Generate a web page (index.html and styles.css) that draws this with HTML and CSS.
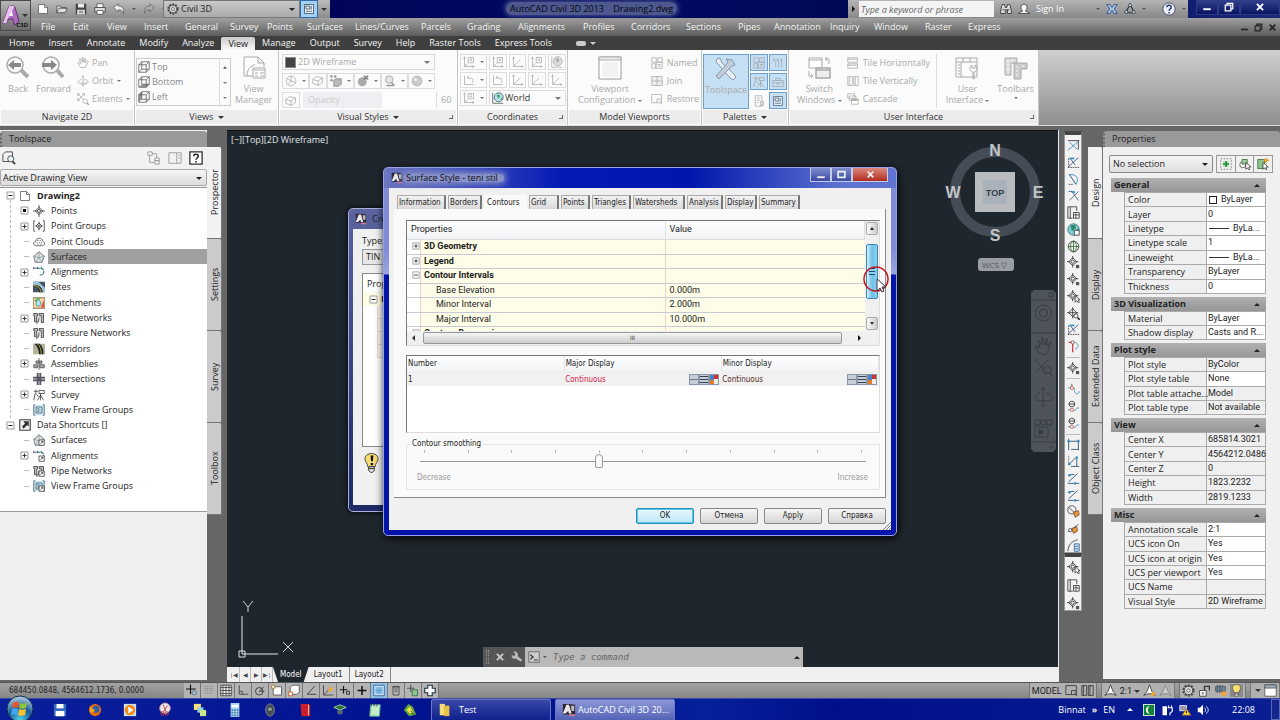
FILE: index.html
```html
<!DOCTYPE html>
<html lang="en">
<head>
<meta charset="utf-8">
<title>AutoCAD Civil 3D 2013 - Drawing2.dwg</title>
<link rel="stylesheet" href="styles.css">
</head>
<body>
<svg class="sprite" aria-hidden="true">
  <symbol id="new" viewBox="0 0 16 16"><path d="M2 2h8l4 4v8H2z" fill="#fff" stroke="#555"/><path d="M10 2v4h4" stroke="#555"/></symbol>
  <symbol id="open" viewBox="0 0 16 16"><path d="M1 13V4h5l1 2h6v2M1 13l3-6h11l-3 6z" fill="#ddd" stroke="#444"/></symbol>
  <symbol id="save" viewBox="0 0 16 16"><path d="M1 1h14v14H1z" fill="#444"/><path d="M4 1h8v5H4zM3 9h10v6H3z" fill="#eee"/><path d="M5 11h6M5 13h6" stroke="#555"/></symbol>
  <symbol id="print" viewBox="0 0 16 16"><path d="M4 6V1h8v5" fill="#fff" stroke="#444"/><path d="M1 6h14v6H1z" fill="#ddd" stroke="#333"/><path d="M4 10h8v5H4z" fill="#fff" stroke="#444"/></symbol>
  <symbol id="undo" viewBox="0 0 16 16"><path d="M1 6l6-5v3c6 0 8 4 7 10-1-4-3-5-7-5v3z" fill="#eee" stroke="#555"/></symbol>
  <symbol id="redo" viewBox="0 0 16 16"><path d="M15 6L9 1v3C3 4 1 8 2 14c1-4 3-5 7-5v3z" fill="#aaa" stroke="#666"/></symbol>
  <symbol id="gear" viewBox="0 0 16 16"><circle cx="8" cy="8" r="6" stroke="#444" stroke-width="3" stroke-dasharray="2.4 1.4"/><circle cx="8" cy="8" r="5" fill="#ddd" stroke="#444"/><circle cx="8" cy="8" r="2" fill="#fff" stroke="#444"/></symbol>
  <symbol id="panel" viewBox="0 0 16 16"><path d="M2 2h12v12H2z" fill="#e8f2fb" stroke="#345"/><path d="M4 4h5v4H4zM11 4v5M4 11h8" stroke="#345"/></symbol>
  <symbol id="binoc" viewBox="0 0 16 16"><path d="M1 9l2-7h3l1 4h2l1-4h3l2 7v5h-5V9H7v5H1z" fill="#ddd" stroke="#222"/><path d="M3 9h3M10 9h3" stroke="#222"/></symbol>
  <symbol id="person" viewBox="0 0 16 16"><path d="M4 6c0-6 8-6 8 0 0 3-2 3-2 5l5 2v1H1v-1l5-2c0-2-2-2-2-5z" fill="#fff" stroke="#333"/></symbol>
  <symbol id="exch" viewBox="0 0 16 16"><path d="M1 2h4l3 4 3-4h4l-4 6 4 6h-4l-3-4-3 4H1l4-6z" fill="#aac2e8" stroke="#223f80"/></symbol>
  <symbol id="a360" viewBox="0 0 16 16"><path d="M8 2L2 13h12z" stroke="#234" stroke-width="1.5"/><circle cx="8" cy="3" r="2" fill="#ddd" stroke="#234"/><circle cx="3" cy="12" r="2" fill="#ddd" stroke="#234"/><circle cx="13" cy="12" r="2" fill="#ddd" stroke="#234"/></symbol>
  <symbol id="help" viewBox="0 0 16 16"><circle cx="8" cy="8" r="7" fill="#eef" stroke="#446"/><path d="M5.500 6c0-3 5-3 5 0 0 2-2.500 2-2.500 4M8 11.500v1.500" stroke="#236" stroke-width="1.600"/></symbol>
  <symbol id="min" viewBox="0 0 16 16"><path d="M2 10h12v3H2z" fill="currentColor"/></symbol>
  <symbol id="rest" viewBox="0 0 16 16"><path d="M5 5V2h9v9h-3M2 5h9v9H2z" stroke="currentColor" stroke-width="2"/></symbol>
  <symbol id="box" viewBox="0 0 16 16"><path d="M2 3h12v10H2z" stroke="currentColor" stroke-width="3"/></symbol>
  <symbol id="x" viewBox="0 0 16 16"><path d="M3 3l10 10M13 3L3 13" stroke="currentColor" stroke-width="3"/></symbol>
  <symbol id="hand" viewBox="0 0 16 16"><path d="M5 14L1 8l1-1 3 2-2-6 1-1 3 5V1h2v6l2-5 1 1-1 5 3-3 1 1-4 8z" stroke="currentColor"/></symbol>
  <symbol id="orbit" viewBox="0 0 16 16"><path d="M8 1v12M6 3l2-2 2 2M6 12l2 3 2-3M6 6C0 7 0 11 6 11h7M10 6c7 1 5 4 3 5M11 9l2 2-2 2" stroke="currentColor"/></symbol>
  <symbol id="extents" viewBox="0 0 16 16"><path d="M1 1l8 8M10 1L1 10M1 4V1h3M7 1h3v3M1 7v3h3" stroke="currentColor"/><circle cx="11" cy="11" r="3" stroke="currentColor"/><path d="M13 13l3 3" stroke="currentColor" stroke-width="2"/></symbol>
  <symbol id="navL" viewBox="0 0 24 24"><circle cx="9" cy="9" r="8" stroke="currentColor" stroke-width="1.500"/><path d="M15 14l7 7" stroke="currentColor" stroke-width="4"/><path d="M2 9l6-5v3h7v4H8v3z" fill="#888"/></symbol>
  <symbol id="navR" viewBox="0 0 24 24"><circle cx="10" cy="9" r="8" stroke="currentColor" stroke-width="1.500"/><path d="M16 14l6 7" stroke="currentColor" stroke-width="4"/><path d="M16 9l-6-5v3H1v4h9v3z" fill="#888"/></symbol>
  <symbol id="cube" viewBox="0 0 16 16"><path d="M1 5h10v10H1zM1 5l4-4h10v10l-4 4M11 5l4-4M5 1v10h10M1 15l4-4" stroke="#555"/></symbol>
  <symbol id="cubeB" viewBox="0 0 16 16"><path d="M1 15l4-4h10l-4 4z" fill="#999"/><path d="M1 5h10v10H1zM1 5l4-4h10v10l-4 4M11 5l4-4M5 1v10h10" stroke="#555"/></symbol>
  <symbol id="cubeL" viewBox="0 0 16 16"><path d="M1 5l4-4v10l-4 4z" fill="#999"/><path d="M1 5h10v10H1zM1 5l4-4h10v10l-4 4M11 5l4-4M5 1v10h10" stroke="#555"/></symbol>
  <symbol id="viewmgr" viewBox="0 0 24 24"><path d="M2 20V1h14l6 6v4M16 1v6h6M5 20c0-10 7-10 8-12M2 20h10" stroke="currentColor"/><path d="M11 12h12v10H11z" fill="#fff" stroke="currentColor"/><path d="M11 14h12M13 17h3M13 20h3M18 17h4M18 20h4" stroke="currentColor"/></symbol>
  <symbol id="wheel" viewBox="0 0 16 16"><circle cx="8" cy="8" r="6.500" stroke="currentColor"/><path d="M8 8V2M8 8l6 2M8 8l-4 5M8 8L3 5" stroke="currentColor"/></symbol>
  <symbol id="solid" viewBox="0 0 16 16"><path d="M1 6l5-4 8 2v6l-6 4-7-3zM1 6l7 2 6-4M8 8v6" stroke="currentColor"/></symbol>
  <symbol id="boxes" viewBox="0 0 16 16"><path d="M1 1h2v2H1zM6 1h2v2H6zM1 6h2v2H1zM5 7l3-2h7v7l-3 3H5z" fill="#bbb" stroke="#888"/></symbol>
  <symbol id="ball" viewBox="0 0 16 16"><circle cx="8" cy="8" r="6.500" fill="#ccc" stroke="currentColor"/><circle cx="6" cy="6" r="2" fill="#f6f6f6"/></symbol>
  <symbol id="ballx" viewBox="0 0 16 16"><circle cx="7" cy="9" r="6" fill="#aaa"/><path d="M9 1l6 5M15 1L9 6" stroke="#777" stroke-width="2"/></symbol>
  <symbol id="shade" viewBox="0 0 16 16"><circle cx="7" cy="6" r="5" fill="#e6e6e6" stroke="#999"/><path d="M3 14h10M10 10l4 4" stroke="#999" stroke-width="2"/></symbol>
  <symbol id="ucs" viewBox="0 0 16 16"><path d="M2 3v11h12M2 14l9-9M1 4l1-3 1 3M12 13l3 1-3 1" stroke="currentColor"/></symbol>
  <symbol id="ucsb" viewBox="0 0 16 16"><path d="M2 3v11h12M2 14l4-4M1 4l1-3 1 3M12 13l3 1-3 1M7 2h7v7H7zM9 4h3M9 6h3" stroke="currentColor"/></symbol>
  <symbol id="ucsr" viewBox="0 0 16 16"><path d="M2 2v12h12M5 6l2-3v3c6-2 8 2 5 6" stroke="currentColor"/></symbol>
  <symbol id="ucsg" viewBox="0 0 16 16"><path d="M1 1v14h14" stroke="currentColor"/><circle cx="9" cy="7" r="6" fill="#ddd" stroke="currentColor"/><path d="M6 4l4-1 1 3-3 3z" fill="#aaa"/></symbol>
  <symbol id="globe" viewBox="0 0 16 16"><path d="M1 1v14h14" stroke="#444"/><circle cx="9" cy="7" r="6" fill="#bde2ee" stroke="#356"/><path d="M6 4l4-1 1 3-3 3zM11 9l3-2-1 4z" fill="#4a7"/></symbol>
  <symbol id="vp" viewBox="0 0 24 24"><path d="M1 1h22v22H1z" fill="#fff" stroke="#999"/><path d="M1 1h22v3H1z" fill="#eee" stroke="#aaa"/><path d="M4 6h16v15H4z" fill="#f2f2f2"/></symbol>
  <symbol id="named" viewBox="0 0 16 16"><path d="M1 1h6v6H1zM9 1h6v6H9zM1 9h5v6H1zM7 7h8v8H7zM9 10h4M9 12h4" stroke="currentColor"/></symbol>
  <symbol id="join" viewBox="0 0 16 16"><path d="M1 2h14v12H1zM8 2v12M1 8h14" fill="#eee" stroke="currentColor"/></symbol>
  <symbol id="restv" viewBox="0 0 16 16"><path d="M1 2h13v11H1zM8 8h6M8 8v5M12 10l3 5" stroke="currentColor"/></symbol>
  <symbol id="tools" viewBox="0 0 24 24"><path d="M3 2l-1 3 3 3 11 13 3 2 3-3-2-3L8 6 6 1z" fill="#e8eef4" stroke="#8899aa"/><path d="M21 8l-3-5-6-1 2 3-2 3L2 19l3 3L16 11l2-2z" fill="#c2cdd8" stroke="#8899aa"/></symbol>
  <symbol id="brush" viewBox="0 0 16 16"><path d="M2 2l3 5v7M7 2l2 5v7M12 2l1 5v7M1 4h3M6 4h3M11 4h3" stroke="currentColor"/></symbol>
  <symbol id="survey" viewBox="0 0 16 16"><path d="M1 3h6M4 1v4M8 2h7v4H8zM10 6v3M10 8L6 15M10 8v7M10 8l4 7M3 5l-2 10M4 6l3 4" stroke="currentColor"/></symbol>
  <symbol id="case" viewBox="0 0 16 16"><path d="M1 6h14v8H1zM5 6V3h6v3M1 9h14M7 9v2h2V9" stroke="currentColor"/></symbol>
  <symbol id="doc" viewBox="0 0 16 16"><path d="M3 1h9v14H3zM5 4h5M5 7h5M5 10h3M10 9h4v5h-4z" stroke="currentColor"/></symbol>
  <symbol id="switch" viewBox="0 0 24 24"><path d="M2 2h13v10H2zM2 4h13" fill="#fff" stroke="currentColor"/><path d="M9 12h14v10H9zM9 14h14" fill="#eee" stroke="currentColor" stroke-width="1.500"/><path d="M18 3h4v5M20 1l-2 2 2 2M2 15v5h4M4 18l2 2-2 2" stroke="currentColor"/></symbol>
  <symbol id="tileh" viewBox="0 0 16 16"><path d="M1 1h13v6H1zM1 9h13v6H1zM1 3h13M1 11h13" stroke="currentColor"/></symbol>
  <symbol id="tilev" viewBox="0 0 16 16"><path d="M1 2h6v12H1zM9 2h6v12H9zM3 2v12M11 2v12" stroke="currentColor"/></symbol>
  <symbol id="casc" viewBox="0 0 16 16"><path d="M1 1h9v6H1zM3 4h9v6H3zM6 8h9v7H6z" fill="#fff" stroke="currentColor"/><path d="M6 9h9" stroke="currentColor" stroke-width="2"/></symbol>
  <symbol id="ui" viewBox="0 0 24 24"><path d="M1 2h21v19H1zM1 6h21M8 2v4M15 2v4M6 6v15" stroke="currentColor"/><path d="M3 9h2M3 12h2M3 15h2M3 18h2" stroke="currentColor"/><path d="M18 23V16c-4-1-4-5-1-7v3h3V9c3 2 2 6-1 7v7z" fill="#fff" stroke="currentColor"/></symbol>
  <symbol id="tbars" viewBox="0 0 24 24"><path d="M1 2h12v5H7v12H1z" fill="#ddd" stroke="currentColor"/><path d="M10 7h13v6h-6v10h-7z" fill="#ccc" stroke="currentColor"/><path d="M3 5h2M3 9h2M3 13h2M7 5h2M12 11h2M12 15h2M12 19h2M18 10h2" stroke="#fff"/></symbol>
  <symbol id="pt" viewBox="0 0 16 16"><path d="M8 0v16M0 8h16M8 3l5 5-5 5-5-5z" stroke="#333"/><circle cx="8" cy="8" r="2" fill="#fff" stroke="#333"/></symbol>
  <symbol id="ptg" viewBox="0 0 16 16"><path d="M3 1H1v14h2M13 1h2v14h-2M8 2v12M3 8h10M8 4l4 4-4 4-4-4z" stroke="#333"/></symbol>
  <symbol id="cloud" viewBox="0 0 16 16"><path d="M3 13C-1 11 1 7 4 7c0-6 9-5 9 0 4 1 3 6-1 6z" stroke="#444"/><path d="M6 6h1M9 6h1M5 9h1M8 9h1M11 9h1M6 11h1M10 11h1" stroke="#333" stroke-width="1.500"/></symbol>
  <symbol id="surf" viewBox="0 0 16 16"><path d="M1 7l7-6 7 6-3 8H3z" fill="#dce3e6" stroke="#555"/><path d="M8 1v8M1 7l7 2 7-2M8 9l-5 6M8 9l4 6" stroke="#899"/></symbol>
  <symbol id="align" viewBox="0 0 16 16"><path d="M1 3h9c6 0 6 9 0 9H8" stroke="#2a7a94" stroke-width="1.500" stroke-dasharray="4 1"/><path d="M1 1v3M6 1v3M11 1v3" stroke="#333"/></symbol>
  <symbol id="site" viewBox="0 0 16 16"><path d="M0 1h16v14H0z" fill="#456"/><path d="M0 1h7l9 8v6h-3C12 8 7 6 0 6z" fill="#9cc6dc"/><path d="M1 5c7 0 12 4 12 10H8C8 10 5 8 1 8z" fill="#333"/><path d="M1 6c6 1 9 4 10 9" stroke="#dd3"/></symbol>
  <symbol id="catch" viewBox="0 0 16 16"><path d="M0 1h16v14H0z" fill="#f5d9a0" stroke="#643"/><path d="M1 5l5-4h4L7 8z" fill="#7b6"/><path d="M10 14L15 3v11z" fill="#db5b3c"/><path d="M7 3c5 5 4 9 0 9S3 8 7 3z" fill="#b8e3f8" stroke="#28a"/></symbol>
  <symbol id="pipe" viewBox="0 0 16 16"><path d="M1 2h5v3H5v8H2V5H1zM8 2h6v12h-3V5H8zM4 15c3 0 4-2 4-8" fill="#bbb" stroke="#333"/></symbol>
  <symbol id="corr" viewBox="0 0 16 16"><path d="M0 1h16v14H0z" fill="#b5b39b"/><path d="M2 1h7c4 4 5 8 5 14H8C8 9 6 5 2 1z" fill="#222"/><path d="M6 1c4 4 5 8 5 14" stroke="#cd5"/></symbol>
  <symbol id="asm" viewBox="0 0 16 16"><path d="M8 0v16M4 4h8v3H4zM1 9h5v4H1zM9 9h6v4H9z" fill="#aaa" stroke="#444"/></symbol>
  <symbol id="inter" viewBox="0 0 16 16"><path d="M5 0h6v5h5v6h-5v5H5v-5H0V5h5z" fill="#556"/><path d="M8 0v5M8 11v5M0 8h5M11 8h5" stroke="#fff"/></symbol>
  <symbol id="frame" viewBox="0 0 16 16"><path d="M1 1h14v14H1z" fill="#cde7f2"/><path d="M3 1H1v14h2M13 1h2v14h-2M4 4h8v8H4zM6 6h2M6 8h4M6 10h2" stroke="#356"/></symbol>
  <symbol id="short" viewBox="0 0 16 16"><path d="M1 1h14v14H1z" fill="#eee" stroke="#444" stroke-width="1.500"/><path d="M6 3h7v7l-2-2-5 5-2-3 4-4z" fill="#333"/></symbol>
  <symbol id="link" viewBox="0 0 16 16"><path d="M8 8h7v7H8z" fill="#fff" stroke="#333"/><path d="M10 13l3-3M11 10h2v2" stroke="#333"/></symbol>
  <symbol id="find" viewBox="0 0 16 16"><path d="M8 12H1V4l3-3h8v7" stroke="#444"/><circle cx="10" cy="9" r="3.500" fill="#e6f0f6" stroke="#444"/><path d="M12 12l3 3" stroke="#333" stroke-width="2"/></symbol>
  <symbol id="nodes" viewBox="0 0 16 16"><path d="M1 1h5v4H1zM3 5v8h6M6 3h5v5M9 8h5v3H9zM9 11h5v4H9z" stroke="#999"/></symbol>
  <symbol id="pane" viewBox="0 0 16 16"><path d="M1 2h14v12H1zM10 2v12M12 5h2M12 8h2" stroke="#999"/></symbol>
  <symbol id="q" viewBox="0 0 16 16"><path d="M1 1h14v14H1z" fill="#fff" stroke="#333" stroke-width="1.500"/><path d="M5.500 6c0-3 5-3 5 0 0 2-2.500 2-2.500 4M8 11.500V13" stroke="#222" stroke-width="1.800"/></symbol>
  <symbol id="lines1" viewBox="0 0 16 16"><path d="M1 2h14M14 2v11" stroke="#333"/><path d="M1 14L14 3M3 4l10 9" stroke="#38b"/></symbol>
  <symbol id="lines2" viewBox="0 0 16 16"><path d="M1 14h14M2 3v11" stroke="#333" stroke-dasharray="2 1"/><path d="M2 13L14 2M4 3l6 8" stroke="#347"/><path d="M3 3h6" stroke="#38b" stroke-width="2"/></symbol>
  <symbol id="arc" viewBox="0 0 16 16"><path d="M3 2c9-1 12 5 8 12z" stroke="#38b"/><path d="M3 2l8 12M2 14h5" stroke="#444" stroke-dasharray="2 1"/></symbol>
  <symbol id="ang" viewBox="0 0 16 16"><path d="M2 3h4l8 11M3 14L14 3" stroke="#456"/><path d="M5 3l5 1" stroke="#38b" stroke-width="2"/></symbol>
  <symbol id="sheet" viewBox="0 0 16 16"><path d="M1 1h11v5M1 1v14h6M4 1v14" stroke="#333"/><path d="M8 8h7v7H8zM8 11h7M11 8v7" fill="#fff" stroke="#333"/></symbol>
  <symbol id="world" viewBox="0 0 16 16"><circle cx="8" cy="8" r="7" fill="#7fd0d8" stroke="#367"/><path d="M4 3l6-1 1 4-5 4zM12 8l2-2v5z" fill="#386"/><path d="M9 9h6v6H9z" fill="#fff" stroke="#333"/></symbol>
  <symbol id="wire" viewBox="0 0 16 16"><circle cx="8" cy="8" r="6.500" fill="#e5f4df" stroke="#333"/><path d="M1 8h14M8 1v14M8 1C3 4 3 12 8 15M8 1c5 3 5 11 0 14" stroke="#465"/></symbol>
  <symbol id="pts" viewBox="0 0 16 16"><path d="M7 0v4M7 10v4M0 7h4M10 7h4M7 2l5 5-5 5-5-5z" stroke="#333"/><circle cx="7" cy="7" r="2" stroke="#333"/><path d="M11 11h4v4h-4z" fill="#555"/></symbol>
  <symbol id="ptc" viewBox="0 0 16 16"><path d="M7 0v4M7 10v4M0 7h4M10 7h4M7 2l5 5-5 5-5-5z" stroke="#333"/><circle cx="7" cy="7" r="2" stroke="#333"/><path d="M10 7v8l2-2 2 3 1-1-1-3h2z" fill="#fff" stroke="#333"/></symbol>
  <symbol id="ptm" viewBox="0 0 16 16"><path d="M7 0v14M0 7h14M7 2l5 5-5 5-5-5z" stroke="#333"/><circle cx="11" cy="11" r="2.500" fill="#fff" stroke="#333"/><path d="M13 13l3 3" stroke="#333" stroke-width="2"/></symbol>
  <symbol id="tee" viewBox="0 0 16 16"><path d="M2 3h6M7 4v11" stroke="#c33" stroke-width="1.500"/><path d="M9 3c6 0 6 8 1 8" stroke="#38b"/><circle cx="7" cy="3" r="2" fill="#fff" stroke="#844"/></symbol>
  <symbol id="curve" viewBox="0 0 16 16"><path d="M1 6h6M9 6c-1 9 6 9 6 4" stroke="#38a"/><circle cx="6" cy="6" r="2" fill="#fff" stroke="#c44"/><path d="M6 1v3" stroke="#444"/></symbol>
  <symbol id="curve2" viewBox="0 0 16 16"><path d="M1 12h4M8 12c4 4 1-4 7-2" stroke="#38a"/><circle cx="6" cy="5" r="3.500" stroke="#333"/><path d="M2 5h8" stroke="#333"/><circle cx="6" cy="12" r="2" fill="#fff" stroke="#c44"/></symbol>
  <symbol id="dim" viewBox="0 0 16 16"><path d="M2 1v14M2 4h12M14 2v13M5 14h9" stroke="#246"/><circle cx="2" cy="4" r="1.500" fill="#38b"/><circle cx="14" cy="4" r="1.500" fill="#38b"/></symbol>
  <symbol id="dim2" viewBox="0 0 16 16"><path d="M2 12L11 3M5 14h10M12 4v10" stroke="#246"/><path d="M2 1v11" stroke="#333" stroke-dasharray="1 1"/><circle cx="3" cy="11" r="1.500" fill="#38b"/><circle cx="12" cy="3" r="1.500" fill="#38b"/></symbol>
  <symbol id="dim3" viewBox="0 0 16 16"><path d="M1 14h14M2 12L13 2M4 3h5" stroke="#246"/><circle cx="3" cy="4" r="1.500" fill="#38b"/><circle cx="10" cy="14" r="1.500" fill="#38b"/></symbol>
  <symbol id="paint" viewBox="0 0 16 16"><circle cx="6" cy="6" r="5" stroke="#444"/><path d="M2 3l7 6" stroke="#444"/><path d="M8 9l6-2 1 5-5 3z" fill="#e39b3c" stroke="#842"/></symbol>
  <symbol id="paint2" viewBox="0 0 16 16"><path d="M1 12L14 3" stroke="#444"/><circle cx="4" cy="10" r="2" fill="#fff" stroke="#444"/><path d="M6 8l6-2 1 5-5 3z" fill="#e39b3c" stroke="#842"/></symbol>
  <symbol id="calc" viewBox="0 0 16 16"><path d="M1 15C2 7 5 3 13 1" stroke="#333"/><path d="M9 6h6v9H9z" fill="#d8ecfa" stroke="#258"/><path d="M10 9h4M10 12h4" stroke="#258"/></symbol>
  <symbol id="snap" viewBox="0 0 16 16"><path d="M6 0v13M0 6h13" stroke="#111" stroke-width="1.500"/><circle cx="11" cy="11" r="3" stroke="#37a"/></symbol>
  <symbol id="dots" viewBox="0 0 16 16"><path d="M3 2v12M6 2v12M9 2v12M12 2v12" stroke="#555" stroke-dasharray="1 2"/></symbol>
  <symbol id="grid" viewBox="0 0 16 16"><path d="M1 1h14v14H1z" fill="#eee"/><path d="M1 1h14v14H1zM4 1v14M8 1v14M12 1v14M1 4h14M1 8h14M1 12h14" stroke="#333"/></symbol>
  <symbol id="ortho" viewBox="0 0 16 16"><path d="M3 1v12h12M3 9h4v4" stroke="#333"/></symbol>
  <symbol id="polar" viewBox="0 0 16 16"><circle cx="7" cy="9" r="5" stroke="#222"/><path d="M7 9h7M7 9l6-6" stroke="#222"/></symbol>
  <symbol id="osnap" viewBox="0 0 16 16"><path d="M3 3h11v11H3z" fill="#fff" stroke="#444"/><path d="M1 1h4v4H1z" fill="#fff" stroke="#a60"/></symbol>
  <symbol id="osnap3" viewBox="0 0 16 16"><path d="M3 4l3-3h9v9l-3 3H3z" fill="#fff" stroke="#444"/><path d="M1 10h5v5H1z" fill="#fff" stroke="#c40"/></symbol>
  <symbol id="angle" viewBox="0 0 16 16"><path d="M13 2L3 13h12" stroke="#222"/></symbol>
  <symbol id="ducs" viewBox="0 0 16 16"><path d="M2 1v13h13M2 14L9 7" stroke="#333"/><path d="M8 8l6-7-1 5 2 1-6 3z" fill="#f6a623"/></symbol>
  <symbol id="plus" viewBox="0 0 16 16"><path d="M8 2v12M2 8h12" stroke="#111" stroke-width="2"/></symbol>
  <symbol id="plusb" viewBox="0 0 16 16"><path d="M6 2v10M1 7h10" stroke="#111" stroke-width="1.500"/><path d="M10 9h4v4h-4z" stroke="#111"/></symbol>
  <symbol id="check" viewBox="0 0 16 16"><path d="M1 1h14v14H1z" fill="#dcefff" stroke="#247"/><path d="M3 3h10v10H3z" fill="#8fc4ea"/><path d="M4 4l8 8M12 4l-8 8M8 3v10M3 8h10" stroke="#5a9acc"/></symbol>
  <symbol id="qp" viewBox="0 0 16 16"><path d="M4 3h8v11H4zM3 3h10M6 6h4M6 9h4" stroke="#333"/></symbol>
  <symbol id="sel" viewBox="0 0 16 16"><path d="M5 0v10M0 5h10" stroke="#333"/><path d="M7 7h7v8H7z" fill="#8fc48a" stroke="#264"/></symbol>
  <symbol id="cross" viewBox="0 0 16 16"><path d="M5 1h6v4h4v6h-4v4H5v-4H1V5h4z" fill="#fff" stroke="#234" stroke-width="1.500"/></symbol>
  <symbol id="anno" viewBox="0 0 16 16"><path d="M8 1l3 8 4 5-5-2H6l-5 2 4-5z" fill="#fff" stroke="#333"/></symbol>
  <symbol id="bulb" viewBox="0 0 16 22"><path d="M4 15C4 11 1 10 1 6.500 1-1 15-1 15 6.500 15 10 12 11 12 15z" fill="#f7dc6e" stroke="#444"/><path d="M5 15h6v4l-2 2H7l-2-2zM5 17h6" fill="#ddd" stroke="#333"/></symbol>
  <symbol id="acad" viewBox="0 0 16 16"><path d="M1 1h7l7 1v11H1z" fill="#2e2630"/><path d="M1 12L5 2h3l3 10H8L7 9 4 12z" fill="#e8e8ea"/><path d="M10 3h4v6h-3z" fill="#bcbcc0"/><path d="M8 13h7v2H8z" fill="#d57a9b"/></symbol>
  <symbol id="expand" viewBox="0 0 9 9"><path d="M1 1h7v7H1z" fill="#fff" stroke="#999"/><path d="M2.500 4.500h4M4.500 2.500v4" stroke="#333"/></symbol>
  <symbol id="expandd" viewBox="0 0 9 9"><path d="M1 1h7v7H1z" fill="#fff" stroke="#999"/><path d="M3 3h3v3H3z" fill="#111"/></symbol>
  <symbol id="shrink" viewBox="0 0 9 9"><path d="M1 1h7v7H1z" fill="#fff" stroke="#999"/><path d="M2.500 4.500h4" stroke="#222"/></symbol>
  <symbol id="wrench" viewBox="0 0 16 16"><path d="M13 14l2-2-6-5c1-4-2-7-6-6l3 3-2 3-3-2c-1 4 2 6 5 5z" fill="#bbb"/></symbol>
  <symbol id="prompt" viewBox="0 0 16 16"><path d="M1 1h14v14H1z" fill="#ccc" stroke="#555"/><path d="M3 5l4 3-4 3M8 12h5" stroke="#333" stroke-width="1.500"/></symbol>
</svg>

<header class="titlebar">
  <button class="appbtn" aria-label="Application menu">
    <svg class="applogo" viewBox="0 0 20 24"><path d="M1 20L8 1h6l5 17-5 4-2-7-6 1-1 4z" fill="#b06cc0" stroke="#5c2270"/><path d="M8 1h6l-4 8-4 7-1 4-4 0z" fill="#e6c4ee"/><path d="M8 12l3-6 1 6z" fill="#fff"/></svg>
    <span class="appver">C3D</span><span class="tri apptri"></span>
  </button>
  <div class="quick">
    <svg class="i12"><use href="#new"/></svg><svg class="i12"><use href="#open"/></svg><svg class="i12"><use href="#save"/></svg><svg class="i12"><use href="#print"/></svg><svg class="i12"><use href="#undo"/></svg><span class="tri dim"></span><svg class="i12"><use href="#redo"/></svg><span class="tri dim"></span>
  </div>
  <label class="dd workspace"><svg class="i12"><use href="#gear"/></svg><select aria-label="Workspace"><option>Civil 3D</option></select></label>
  <button class="wsbtn" aria-label="Toggle panel"><svg class="i12"><use href="#panel"/></svg></button>
  <div class="wsmore"><span class="tri"></span></div>
  <h1 class="apptitle"><span>AutoCAD Civil 3D 2013 &nbsp; &nbsp;Drawing2.dwg</span></h1>
  <div class="infocenter">
    <span class="tri right"></span>
    <input class="search" type="text" placeholder="Type a keyword or phrase" aria-label="Search">
    <svg class="i12"><use href="#binoc"/></svg><svg class="i12"><use href="#person"/></svg><span class="signin">Sign In</span><span class="tri dim"></span>
    <svg class="i12"><use href="#exch"/></svg><svg class="i12"><use href="#a360"/></svg><span class="tri dim"></span><svg class="i14 helpic"><use href="#help"/></svg><span class="tri dim"></span>
  </div>
  <div class="winbtns"><button aria-label="Minimize"><svg class="i10"><use href="#min"/></svg></button><button aria-label="Restore"><svg class="i10"><use href="#rest"/></svg></button><button class="wide" aria-label="Close"><svg class="i10"><use href="#x"/></svg></button></div>
</header>

<nav class="menubar">
  <div class="menus"><span>File</span><span>Edit</span><span>View</span><span>Insert</span><span>General</span><span>Survey</span><span>Points</span><span>Surfaces</span><span>Lines/Curves</span><span>Parcels</span><span>Grading</span><span>Alignments</span><span>Profiles</span><span>Corridors</span><span>Sections</span><span>Pipes</span><span>Annotation</span><span>Inquiry</span><span>Window</span><span>Raster</span><span>Express</span></div>
  <div class="docbtns"><svg class="i9"><use href="#min"/></svg><svg class="i9"><use href="#rest"/></svg><svg class="i9"><use href="#x"/></svg></div>
</nav>

<nav class="ribtabs">
  <button>Home</button><button>Insert</button><button>Annotate</button><button>Modify</button><button>Analyze</button><button class="on">View</button><button>Manage</button><button>Output</button><button>Survey</button><button>Help</button><button>Raster Tools</button><button>Express Tools</button><span class="ribmin"><i></i><span class="tri light"></span></span>
</nav>

<section class="ribbon">
  <div class="rp p-nav"><div class="rbody">
    <button class="big"><svg class="i24"><use href="#navL"/></svg>Back</button>
    <button class="big"><svg class="i24"><use href="#navR"/></svg>Forward</button>
    <div class="rcol"><button><svg class="i12"><use href="#hand"/></svg>Pan</button><button><svg class="i12"><use href="#orbit"/></svg>Orbit<span class="tri"></span></button><button><svg class="i12"><use href="#extents"/></svg>Extents<span class="tri"></span></button></div>
  </div><h2>Navigate 2D</h2></div>
  <div class="rp p-views"><div class="rbody">
    <div class="viewlist"><ul><li><svg class="i12"><use href="#cube"/></svg>Top</li><li><svg class="i12"><use href="#cubeB"/></svg>Bottom</li><li><svg class="i12"><use href="#cubeL"/></svg>Left</li></ul><div class="vscroll"><span class="tri up"></span><span class="tri"></span><span class="tri"></span></div></div>
    <button class="big"><svg class="i24"><use href="#viewmgr"/></svg><span>View</span><span>Manager</span></button>
  </div><h2>Views <span class="tri"></span></h2></div>
  <div class="rp p-vis"><div class="rbody stack">
    <label class="dd vstyle"><i class="swatch"></i><select aria-label="Visual style"><option>2D Wireframe</option></select></label>
    <div class="vrow"><button><svg class="i12"><use href="#wheel"/></svg><span class="tri"></span></button><button class="one"><svg class="i12"><use href="#solid"/></svg></button><button><svg class="i12"><use href="#boxes"/></svg><span class="tri"></span></button><button><svg class="i12"><use href="#ballx"/></svg><span class="tri"></span></button><button><svg class="i12"><use href="#shade"/></svg><span class="tri"></span></button><button><svg class="i12"><use href="#ball"/></svg><span class="tri"></span></button></div>
    <div class="opacity"><button class="one"><svg class="i12"><use href="#solid"/></svg></button><span class="opbar"><span>Opacity</span></span><output>60</output></div>
  </div><h2>Visual Styles <span class="tri"></span><i class="launch"></i></h2></div>
  <div class="rp p-coord"><div class="rbody coord">
    <button class="w27"><svg class="i12"><use href="#ucsb"/></svg><span class="tri"></span></button><button><svg class="i12"><use href="#ucsb"/></svg></button><button><svg class="i12"><use href="#ucs"/></svg></button><button><svg class="i12"><use href="#ucsb"/></svg></button><button><svg class="i12"><use href="#ucsg"/></svg></button>
    <button class="w27"><svg class="i12"><use href="#ucsr"/></svg><span class="tri"></span></button><button><svg class="i12"><use href="#ucsr"/></svg></button><button><svg class="i12"><use href="#ucs"/></svg></button><button><svg class="i12"><use href="#ucs"/></svg></button><button><svg class="i12"><use href="#ucs"/></svg></button>
    <button class="w27"><svg class="i12"><use href="#ucsb"/></svg><span class="tri"></span></button><label class="dd world"><svg class="i12"><use href="#globe"/></svg><select aria-label="Coordinate system"><option>World</option></select></label>
  </div><h2>Coordinates<i class="launch"></i></h2></div>
  <div class="rp p-vp"><div class="rbody">
    <button class="big"><svg class="i24"><use href="#vp"/></svg><span>Viewport</span><span>Configuration <span class="tri"></span></span></button>
    <div class="rcol"><button><svg class="i12"><use href="#named"/></svg>Named</button><button><svg class="i12"><use href="#join"/></svg>Join</button><button><svg class="i12"><use href="#restv"/></svg>Restore</button></div>
  </div><h2>Model Viewports</h2></div>
  <div class="rp p-pal"><div class="rbody">
    <button class="big lit"><svg class="i24"><use href="#tools"/></svg>Toolspace</button>
    <div class="palgrid"><button class="lit"><svg class="i12"><use href="#named"/></svg></button><button class="lit"><svg class="i12"><use href="#brush"/></svg></button><button class="lit"><svg class="i12"><use href="#survey"/></svg></button><button class="lit"><svg class="i12"><use href="#case"/></svg></button><button><svg class="i12"><use href="#doc"/></svg></button><button class="lit"><svg class="i12"><use href="#panel"/></svg></button></div>
  </div><h2>Palettes <span class="tri"></span></h2></div>
  <div class="rp p-ui"><div class="rbody">
    <button class="big"><svg class="i24"><use href="#switch"/></svg><span>Switch</span><span>Windows <span class="tri"></span></span></button>
    <div class="rcol"><button><svg class="i12"><use href="#tileh"/></svg>Tile Horizontally</button><button><svg class="i12"><use href="#tilev"/></svg>Tile Vertically</button><button><svg class="i12"><use href="#casc"/></svg>Cascade</button></div>
    <i class="sep"></i>
    <button class="big"><svg class="i24"><use href="#ui"/></svg><span>User</span><span>Interface <span class="tri"></span></span></button>
    <button class="big"><svg class="i24"><use href="#tbars"/></svg>Toolbars<span class="tri"></span></button>
  </div><h2>User Interface<i class="launch"></i></h2></div>
</section>

<main class="work">
  <aside class="toolspace">
    <div class="tspanel">
      <h2 class="palhead">Toolspace</h2>
      <div class="tstools"><svg class="i14"><use href="#find"/></svg><span class="grow"></span><svg class="i14"><use href="#nodes"/></svg><svg class="i14"><use href="#pane"/></svg><svg class="i14"><use href="#q"/></svg></div>
      <label class="dd tsview"><select aria-label="View"><option>Active Drawing View</option></select></label>
      <div class="treebox"><ul class="tree">
        <li class="root"><svg class="ex"><use href="#shrink"/></svg><svg class="i12"><use href="#new"/></svg><b>Drawing2</b></li>
        <li><svg class="ex"><use href="#expandd"/></svg><svg class="i12"><use href="#pt"/></svg><span>Points</span></li>
        <li><svg class="ex"><use href="#expand"/></svg><svg class="i12"><use href="#ptg"/></svg><span>Point Groups</span></li>
        <li><i class="ex"></i><svg class="i12"><use href="#cloud"/></svg><span>Point Clouds</span></li>
        <li><i class="ex"></i><svg class="i12"><use href="#surf"/></svg><span class="sel">Surfaces</span></li>
        <li><svg class="ex"><use href="#expand"/></svg><svg class="i12"><use href="#align"/></svg><span>Alignments</span></li>
        <li><i class="ex"></i><svg class="i12"><use href="#site"/></svg><span>Sites</span></li>
        <li><i class="ex"></i><svg class="i12"><use href="#catch"/></svg><span>Catchments</span></li>
        <li><svg class="ex"><use href="#expand"/></svg><svg class="i12"><use href="#pipe"/></svg><span>Pipe Networks</span></li>
        <li><i class="ex"></i><svg class="i12"><use href="#pipe"/></svg><span>Pressure Networks</span></li>
        <li><i class="ex"></i><svg class="i12"><use href="#corr"/></svg><span>Corridors</span></li>
        <li><svg class="ex"><use href="#expand"/></svg><svg class="i12"><use href="#asm"/></svg><span>Assemblies</span></li>
        <li><i class="ex"></i><svg class="i12"><use href="#inter"/></svg><span>Intersections</span></li>
        <li><svg class="ex"><use href="#expand"/></svg><svg class="i12 dark"><use href="#survey"/></svg><span>Survey</span></li>
        <li><i class="ex"></i><svg class="i12"><use href="#frame"/></svg><span>View Frame Groups</span></li>
        <li class="root"><svg class="ex"><use href="#shrink"/></svg><svg class="i12"><use href="#short"/></svg><span>Data Shortcuts []</span></li>
        <li><i class="ex"></i><svg class="i12"><use href="#surf"/><use href="#link"/></svg><span>Surfaces</span></li>
        <li><svg class="ex"><use href="#expand"/></svg><svg class="i12"><use href="#align"/><use href="#link"/></svg><span>Alignments</span></li>
        <li><i class="ex"></i><svg class="i12"><use href="#pipe"/><use href="#link"/></svg><span>Pipe Networks</span></li>
        <li><i class="ex"></i><svg class="i12"><use href="#frame"/><use href="#link"/></svg><span>View Frame Groups</span></li>
      </ul></div>
    </div>
    <div class="sidetabs"><button class="on">Prospector</button><button>Settings</button><button>Survey</button><button>Toolbox</button></div>
  </aside>

  <section class="drawing">
    <div class="canvas">
      <p class="vplabel">[−][Top][2D Wireframe]</p>
      <svg class="viewcube" viewBox="0 0 104 104"><circle cx="52" cy="52" r="40" stroke="#454c55" stroke-width="10"/><path d="M32 32h40v40H32z" fill="#b9bcbe"/><path d="M40 40h24v24H40z" fill="#aab2b9"/><text x="52" y="56" font-size="9" fill="#35404d">TOP</text><g fill="#c2c5c8" font-size="16"><text x="52" y="16">N</text><text x="52" y="101">S</text><text x="10" y="58">W</text><text x="95" y="58">E</text></g></svg>
      <button class="wcs">WCS <span>▽</span></button>
      <svg class="navbar" viewBox="0 0 25 162"><path d="M3 0h19l3 3v156l-3 3H3l-3-3V3z" fill="#5b6068"/><g stroke="#3d434b"><path d="M0 10h25M0 43h25M0 152h25"/><circle cx="12.500" cy="23" r="8"/><circle cx="12.500" cy="23" r="4"/><path d="M18 3h4v4h-4zM18 157h4"/><path d="M8 63l-4-6 1-1 4 2-2-8 4 5V47l3 8 2-7v8l4-5-3 10-3 4z"/><path d="M4 69l12 14M18 69L4 83"/><circle cx="16" cy="80" r="4"/><path d="M19 83l3 4M12 97v20M10 100l2-3 3 3M10 114l2 3 3-3M9 103c-8 3-4 8 2 8h10M15 103c8 2 6 6 5 8M4 130h5v5H4zM10 130h5v5h-5zM16 130h5v5h-5zM4 137h13v10H4z"/><path d="M8 139l5 3-5 3z" fill="#3d434b"/></g></svg>
      <svg class="ucsicon" viewBox="0 0 56 60"><path d="M4 16v38h36M1 51h6v6H1z" stroke="#e4e6e8"/><path d="M5 1l5 6 5-6M10 7v5M45 42l10 10M55 42L45 52" stroke="#d0d3d6"/></svg>

      <div class="cmd"><span class="grip"></span><svg class="i10"><use href="#x"/></svg><svg class="i12"><use href="#wrench"/></svg><label><svg class="i12"><use href="#prompt"/></svg><span class="tri dim"></span><input type="text" placeholder="Type a command" aria-label="Command"><span class="tri up"></span></label></div>

      <div class="win back">
        <div class="wtitle"><svg class="i12"><use href="#acad"/></svg>Create Surface</div>
        <div class="wbody"><label for="stype">Type:</label><select id="stype"><option>TIN surface</option></select>
          <div class="backlist"><b>Properties</b><div><svg class="ex"><use href="#shrink"/></svg>Information</div><p></p><p></p><p></p><p></p></div>
          <svg class="warn" viewBox="0 0 16 22"><use href="#bulb"/><path d="M7 3h3l-.5 6h-2zM7.200 11h2.500v2.500H7.200z" fill="#111"/></svg>
        </div>
      </div>

      <div class="win front">
        <div class="wtitle"><svg class="i12"><use href="#acad"/></svg><span>Surface Style - teni stil</span>
          <div class="wbtns"><button aria-label="Minimize"><svg class="i10"><use href="#min"/></svg></button><button aria-label="Maximize"><svg class="i9"><use href="#box"/></svg></button><button class="close" aria-label="Close"><svg class="i9"><use href="#x"/></svg></button></div>
        </div>
        <div class="wbody">
          <div class="tabs"><button>Information</button><button>Borders</button><button class="on">Contours</button><button>Grid</button><button>Points</button><button>Triangles</button><button>Watersheds</button><button>Analysis</button><button>Display</button><button>Summary</button></div>
          <div class="page">
            <div class="proplist">
              <div class="plview"><table>
                <thead><tr><th class="c1">Properties</th><th>Value</th></tr></thead>
                <tbody>
                <tr class="grp"><td><svg class="ex"><use href="#expand"/></svg><b>3D Geometry</b></td><td></td></tr>
                <tr class="grp"><td><svg class="ex"><use href="#expand"/></svg><b>Legend</b></td><td></td></tr>
                <tr class="grp"><td><svg class="ex"><use href="#shrink"/></svg><b>Contour Intervals</b></td><td></td></tr>
                <tr><td>Base Elevation</td><td>0.000m</td></tr>
                <tr><td>Minor Interval</td><td>2.000m</td></tr>
                <tr><td>Major Interval</td><td>10.000m</td></tr>
                <tr class="grp"><td><svg class="ex"><use href="#expand"/></svg><b>Contour Depressions</b></td><td></td></tr>
                </tbody></table></div>
              <div class="sbv"><button aria-label="Scroll up"><span class="tri up"></span></button><div class="thumbv"><i></i></div><button aria-label="Scroll down"><span class="tri"></span></button></div>
              <div class="sbh"><span class="tri left"></span><div class="thumbh">III</div><span class="tri right"></span></div>
            </div>
            <div class="numlist"><table>
              <thead><tr><th>Number</th><th>Major Display</th><th>Minor Display</th></tr></thead>
              <tbody><tr><td>1</td><td class="red"><span>Continuous</span><span class="chips"><i></i><i class="bars"></i><i class="clr"></i></span></td><td class="brown"><span>Continuous</span><span class="chips"><i></i><i class="bars"></i><i class="clr"></i></span></td></tr></tbody>
            </table></div>
            <fieldset><legend>Contour smoothing</legend>
              <div class="ticks"><i></i><i></i><i></i><i></i><i></i><i></i><i></i><i></i><i></i><i></i><i></i></div>
              <input type="range" min="0" max="10" value="4" aria-label="Contour smoothing">
              <div class="ends"><span>Decrease</span><span>Increase</span></div>
            </fieldset>
          </div>
          <div class="actions"><button class="ok">OK</button><button>Отмена</button><button>Apply</button><button>Справка</button></div>
        </div>
        <svg class="pointer" viewBox="0 0 26 28"><circle cx="13" cy="13" r="12" stroke="#c8141c" stroke-width="1.500"/><path d="M14 13v12l3-3 2 4 2-1-2-4h4z" fill="#fff" stroke="#334"/></svg>
        <svg class="sizer i9" viewBox="0 0 9 9"><path d="M1 9l8-8M4 9l5-5M7 9l2-2" stroke="#888"/></svg>
      </div>
    </div>
    <div class="layouts"><button class="ar">|◀</button><button class="ar">◀</button><button class="ar">▶</button><button class="ar">▶|</button><button class="lt on">Model</button><button class="lt">Layout1</button><button class="lt">Layout2</button></div>
  </section>

  <aside class="strip">
    <div class="iconcol"><svg class="i13"><use href="#lines1"/></svg><svg class="i13"><use href="#lines2"/></svg><svg class="i13"><use href="#arc"/></svg><svg class="i13"><use href="#ang"/></svg><svg class="i13"><use href="#sheet"/></svg><svg class="i13"><use href="#world"/></svg><svg class="i13"><use href="#wire"/></svg><svg class="i13"><use href="#pts"/></svg><svg class="i13"><use href="#pts"/></svg><svg class="i13"><use href="#ptc"/></svg><svg class="i13"><use href="#ptm"/></svg><svg class="i13"><use href="#lines2"/></svg><svg class="i13"><use href="#tee"/></svg><hr><svg class="i13"><use href="#pts"/></svg><hr><svg class="i13"><use href="#curve"/></svg><svg class="i13"><use href="#curve2"/></svg><svg class="i13"><use href="#curve2"/></svg><hr><svg class="i13"><use href="#dim"/></svg><svg class="i13"><use href="#dim2"/></svg><svg class="i13"><use href="#dim3"/></svg><svg class="i13"><use href="#dim3"/></svg><svg class="i13"><use href="#paint"/></svg><svg class="i13"><use href="#paint2"/></svg><svg class="i13"><use href="#calc"/></svg></div>
    <div class="iconcol small"><svg class="i13"><use href="#ptc"/></svg><svg class="i13"><use href="#sheet"/></svg><svg class="i13"><use href="#pts"/></svg></div>
  </aside>

  <aside class="props">
    <div class="sidetabs"><button class="on">Design</button><button>Display</button><button>Extended Data</button><button>Object Class</button></div>
    <div class="proppanel">
      <h2 class="palhead">Properties</h2>
      <div class="propbody">
        <div class="seltools"><label class="dd"><select aria-label="Selection"><option>No selection</option></select></label><button aria-label="Toggle pickadd"><svg class="i12" viewBox="0 0 16 16"><path d="M1 1h14v14H1z" stroke="#555" stroke-dasharray="2 2"/><path d="M4 4h8v8H4z" fill="#bfe3bf"/><path d="M8 4v8M4 8h8" stroke="#183" stroke-width="2"/></svg></button><button aria-label="Select objects"><svg class="i12" viewBox="0 0 16 16"><circle cx="5" cy="9" r="4" stroke="#555"/><path d="M4 2h7v6H4z" fill="#9ccc9c" stroke="#363"/><path d="M9 6v9l2-2 2 3 1-1-1-3h3z" fill="#fff" stroke="#333"/></svg></button><button aria-label="Quick select"><svg class="i12" viewBox="0 0 16 16"><path d="M1 2h9v12H1z" fill="#8fc48f" stroke="#363"/><path d="M12 0v7M9 3h7" stroke="#e8a020" stroke-width="2"/><path d="M8 6v9l2-2 2 3 1-1-1-3h3z" fill="#fff" stroke="#333"/></svg></button></div>
        <section class="ps"><h3>General<span class="tri up"></span></h3><table class="r7"><tr><th>Color</th><td><i class="sq"></i>ByLayer</td></tr><tr><th>Layer</th><td>0</td></tr><tr><th>Linetype</th><td><i class="ln"></i>ByLa...</td></tr><tr><th>Linetype scale</th><td>1</td></tr><tr><th>Lineweight</th><td><i class="ln"></i>ByLa...</td></tr><tr><th>Transparency</th><td>ByLayer</td></tr><tr><th>Thickness</th><td>0</td></tr></table></section>
        <section class="ps"><h3>3D Visualization<span class="tri up"></span></h3><table class="r2"><tr><th>Material</th><td>ByLayer</td></tr><tr><th>Shadow display</th><td>Casts and R...</td></tr></table></section>
        <section class="ps"><h3>Plot style<span class="tri up"></span></h3><table class="r4"><tr><th>Plot style</th><td class="ro">ByColor</td></tr><tr><th>Plot style table</th><td>None</td></tr><tr><th>Plot table attache...</th><td class="ro">Model</td></tr><tr><th>Plot table type</th><td class="ro">Not available</td></tr></table></section>
        <section class="ps"><h3>View<span class="tri up"></span></h3><table class="r5"><tr><th>Center X</th><td class="ro">685814.3021</td></tr><tr><th>Center Y</th><td class="ro">4564212.0486</td></tr><tr><th>Center Z</th><td class="ro">0</td></tr><tr><th>Height</th><td class="ro">1823.2232</td></tr><tr><th>Width</th><td class="ro">2819.1233</td></tr></table></section>
        <section class="ps"><h3>Misc<span class="tri up"></span></h3><table class="r6"><tr><th>Annotation scale</th><td>2:1</td></tr><tr><th>UCS icon On</th><td>Yes</td></tr><tr><th>UCS icon at origin</th><td>Yes</td></tr><tr><th>UCS per viewport</th><td>Yes</td></tr><tr><th>UCS Name</th><td class="ro"></td></tr><tr><th>Visual Style</th><td class="ro">2D Wireframe</td></tr></table></section>
      </div>
    </div>
  </aside>
</main>

<footer class="status">
  <span class="coords">684450.0848, 4564612.1736, 0.0000</span>
  <div class="toggles"><svg class="i13"><use href="#snap"/></svg><svg class="i13"><use href="#dots"/></svg><svg class="i13"><use href="#grid"/></svg><svg class="i13"><use href="#ortho"/></svg><svg class="i13"><use href="#polar"/></svg><svg class="i13"><use href="#osnap"/></svg><svg class="i13"><use href="#osnap3"/></svg><svg class="i13"><use href="#angle"/></svg><svg class="i13"><use href="#ducs"/></svg><svg class="i13"><use href="#plusb"/></svg><svg class="i13"><use href="#plus"/></svg><svg class="i13 act"><use href="#check"/></svg><svg class="i13"><use href="#qp"/></svg><svg class="i13"><use href="#sel"/></svg><svg class="i13"><use href="#cross"/></svg></div>
  <span class="grow"></span>
  <div class="sright"><button>MODEL</button><svg class="i13 dark"><use href="#restv"/></svg><svg class="i13 dark"><use href="#tilev"/></svg></div>
  <div class="sright"><svg class="i13"><use href="#anno"/></svg><button>2:1<span class="tri"></span></button><svg class="i13"><use href="#anno"/><circle cx="10" cy="10" r="2" fill="#f6a623"/></svg><svg class="i13 fade"><use href="#anno"/></svg></div>
  <div class="sright"><svg class="i13"><use href="#gear"/></svg><svg class="i13" viewBox="0 0 16 16"><path d="M2 8h8v7H2z" fill="#fff" stroke="#333"/><path d="M8 8V3h6v5M6 10v3" stroke="#333" stroke-width="1.500"/></svg><svg class="i13" viewBox="0 0 16 16"><path d="M2 3h12v6H2z" fill="#789" stroke="#456"/><path d="M4 1v10M7 1v10M10 1v10" stroke="#456"/><circle cx="12" cy="12" r="3" fill="#f6a623"/></svg><svg class="i13 bulb" viewBox="0 0 16 22"><use href="#bulb"/></svg></div>
  <div class="sright"><span class="tri"></span><svg class="i13" viewBox="0 0 16 16"><path d="M1 1h14v14H1z" fill="#fff" stroke="#555"/><path d="M1 1h14v4H1z" fill="#9ab" stroke="#555"/></svg></div>
</footer>

<footer class="taskbar">
  <button class="start" aria-label="Start"><svg viewBox="0 0 28 28"><defs><radialGradient id="orb" cx=".5" cy=".9" r=".9"><stop offset="0" stop-color="#4fd0e8"/><stop offset=".5" stop-color="#1a5c94"/><stop offset="1" stop-color="#bcd4e4"/></radialGradient></defs><circle cx="14" cy="14" r="13" fill="url(#orb)" stroke="#0b2a50"/><path d="M7 8c3-2 4-1 6 0l-1 5c-2-1-3-1-6 0z" fill="#e8582a"/><path d="M14 8c3 1 4 1 7 0l-1 5c-3 1-4 1-7 0z" fill="#8cc63f"/><path d="M6 14c3-1 4-1 6 0l-1 6c-2-1-4-1-6 0z" fill="#3fa9f5"/><path d="M13 14c3 1 4 1 7 0l-1 6c-3 1-4 1-7 0z" fill="#fbc02d"/></svg></button>
  <div class="pins">
    <svg class="i14" viewBox="0 0 16 16"><path d="M1 1h14v14H1z" fill="#3768c0"/><path d="M4 1h8v5H4zM3 9h10v6H3z" fill="#fff"/></svg>
    <svg class="i14" viewBox="0 0 16 16"><circle cx="8" cy="8" r="7" fill="#e66a12"/><circle cx="9" cy="7" r="4" fill="#2b5fa8"/><path d="M2 4c2 0 3 3 6 4-1 4-5 3-6 1z" fill="#f9a11b"/></svg>
    <svg class="i14" viewBox="0 0 16 16"><path d="M1 1h14v14H1z" fill="#cfe0ee"/><circle cx="8" cy="8" r="6" fill="#f08a1a"/><path d="M6 4l6 4-6 4z" fill="#fff"/></svg>
    <svg class="i14" viewBox="0 0 16 16"><circle cx="8" cy="6" r="6" fill="#e8e8f0" stroke="#c99"/><path d="M6 2l3 8M11 3L6 10" stroke="#c33"/><circle cx="10" cy="12" r="2" stroke="#c33"/><circle cx="5" cy="12" r="2" stroke="#c33"/></svg>
    <svg class="i14" viewBox="0 0 16 16"><path d="M1 1h8v7H1z" fill="#f5e27a"/><path d="M5 5h7v6H5z" fill="#8fd0e8"/><path d="M8 8h7v7H8z" fill="#c8e68a"/></svg>
    <svg class="i14" viewBox="0 0 16 16"><path d="M3 0h10v16H3z" fill="#a8d4ee"/><path d="M4 2h8v3H4z" fill="#fff"/><path d="M5 7v8M8 7v8M11 7v8" stroke="#4a84b0" stroke-width="2" stroke-dasharray="2 1"/></svg>
    <svg class="i14" viewBox="0 0 16 16"><ellipse cx="8" cy="8" rx="5" ry="7" fill="#444b55" stroke="#889"/><circle cx="8" cy="7" r="2" fill="#9a9"/></svg>
    <svg class="i14" viewBox="0 0 16 16"><path d="M3 1h9l2 1v13H4z" fill="#c9202c"/><path d="M12 2v12" stroke="#fdd"/></svg>
    <svg class="i14" viewBox="0 0 16 16"><path d="M1 5l7-3 7 3-7 3z" fill="#2e6b3a" stroke="#ada"/><path d="M5 8v4c3 2 5 1 6 0V8" fill="#567"/></svg>
    <svg class="i14" viewBox="0 0 16 16"><path d="M3 2h11l-1 13H2z" fill="#c4ecc8" stroke="#5a9"/><path d="M4 1v3M7 1v3M10 1v3" stroke="#456"/></svg>
    <svg class="i14" viewBox="0 0 16 16"><path d="M1 8l5-7 5 3 4 9-8 2z" fill="#62a83c"/><path d="M4 8l4-4 4 7-4 1z" fill="#f5e04a"/><path d="M9 9l3 4" stroke="#223"/></svg>
  </div>
  <button class="task"><svg class="i14" viewBox="0 0 16 16"><path d="M2 1h6v13H2z" fill="#f5dc7a"/><path d="M7 3h6v12H7z" fill="#e8c04a"/></svg>Test</button>
  <button class="task on"><svg class="i14"><use href="#acad"/></svg>AutoCAD Civil 3D 20...</button>
  <span class="grow"></span>
  <div class="tray"><span>Binnat</span><b>»</b><span class="lang">EN</span><span class="tri up light"></span>
    <svg class="i12" viewBox="0 0 16 16"><path d="M0 0h16v16H0z" fill="#fff"/><path d="M1 1h14v14H1z" fill="#15803a"/><path d="M9 3a5 5 0 1 0 0 10 6 6 0 0 1 0-10z" fill="#fff"/></svg>
    <svg class="i12" viewBox="0 0 16 16"><path d="M2 3h6v12H2z" fill="#fff"/><path d="M9 5h6v5l-3 2v3M10 2v3M14 2v3" stroke="#fff" stroke-width="1.500"/></svg>
    <svg class="i12" viewBox="0 0 16 16"><path d="M1 2h9v7H1z" fill="#99a" stroke="#fff"/><path d="M10 6l6 9H4z" fill="#fbd13a" stroke="#754"/><path d="M10 9v3" stroke="#222" stroke-width="1.500"/></svg>
    <svg class="i12" viewBox="0 0 16 16"><path d="M1 5h3l4-4v14l-4-4H1z" fill="#fff"/><path d="M10 5c2 2 2 4 0 6M12 3c4 3 4 7 0 10" stroke="#fff"/></svg>
    <time>22:08</time></div>
  <i class="peek"></i>
</footer>
</body>
</html>
```
FILE: styles.css
```css
* { box-sizing: border-box; }
html { height: 100%; }
body { margin: 0; min-height: 100%; display: flex; flex-direction: column; overflow: hidden; background: #666; color: #222; font: 9px/12px "Open Sans", "Noto Sans", sans-serif; }
button, input, select { font: inherit; color: inherit; margin: 0; padding: 0; border: 0; background: none; border-radius: 0; text-align: inherit; outline: 0; }
select { appearance: none; width: 100%; height: 100%; }
h1, h2, h3, p, ul { margin: 0; padding: 0; font-size: inherit; font-weight: normal; list-style: none; }
table { border-collapse: collapse; table-layout: fixed; }
th { font-weight: normal; text-align: left; }
svg { fill: none; flex: none; display: block; overflow: visible; }
.sprite { position: absolute; width: 0; height: 0; }
.grow { flex: 1; }
.dark { color: #333; }
.fade { opacity: .4; }
.i9 { width: 9px; height: 9px; }
.i10 { width: 10px; height: 10px; }
.i12 { width: 12px; height: 12px; }
.i13 { width: 13px; height: 13px; }
.i14 { width: 14px; height: 14px; }
.i24 { width: 24px; height: 24px; }
.tri { display: inline-block; flex: none; width: 0; height: 0; border: 3px solid transparent; border-top: 3px solid #333; border-bottom: 0; vertical-align: middle; }
.tri.dim { border-top-color: #555; border-width: 2px 2px 0; }
.tri.up { border-top: 0; border-bottom: 3px solid #222; }
.tri.left { border: 3px solid transparent; border-right-color: #333; border-left: 0; }
.tri.right { border: 3px solid transparent; border-left-color: #111; border-right: 0; }
.tri.light { border-top-color: #ccc; }
.tri.up.light { border-bottom-color: #fff; }
.dd { position: relative; display: flex; align-items: center; }
.dd::after { content: ""; position: absolute; right: 4px; top: 50%; margin-top: -1px; border: 3px solid transparent; border-top-color: #222; border-bottom: 0; pointer-events: none; }

.titlebar { height: 18px; display: flex; position: relative; background: linear-gradient(90deg, #00004c, #000a63 50%, #02064a 80%, #1a2a80); }
.appbtn { position: absolute; left: 0; top: 0; z-index: 2; width: 31px; height: 31px; background: linear-gradient(#b5b5b5, #6c6c6c); border: 1px solid #4a4a4a; }
.applogo { width: 18px; height: 22px; margin: 1px 0 0 1px; }
.appver { position: absolute; right: 2px; bottom: 0; font: bold 6px/9px "Open Sans", sans-serif; color: #111; }
.apptri { position: absolute; right: 2px; top: 13px; }
.quick { display: flex; align-items: center; gap: 7px; padding-left: 37px; width: 163px; background: linear-gradient(#bbb, #8c8c8c); }
.workspace { width: 137px; padding: 0 3px; gap: 2px; border: 1px solid #777; background: linear-gradient(#c8c8c8, #aaa); }
.wsbtn { width: 18px; padding: 2px; border: 1px solid #2f6dac; background: #a5d0f3; }
.wsmore { width: 12px; background: linear-gradient(#bbb, #8c8c8c); display: flex; align-items: center; justify-content: center; }
.apptitle { flex: 1; padding: 3px 0 0 176px; color: #05050c; white-space: nowrap; }
.apptitle span { padding: 0 4px; border-radius: 6px; background: #4c588e; box-shadow: 0 0 5px 1px #4c588e; }
.infocenter { width: 340px; display: flex; align-items: center; gap: 6px; padding-left: 4px; background: linear-gradient(#b5b5b5, #888); color: #fff; }
.search { width: 135px; height: 16px; padding: 0 2px; background: #f4f4f4; color: #555; font-style: italic; }
.search::placeholder { color: #666; }
.signin { width: 54px; }
.infocenter .search { margin-left: -2px; }
.helpic { margin-left: 10px; }
.winbtns { width: 92px; height: 15px; padding-left: 8px; display: flex; color: #fff; }
.winbtns button { width: 22px; display: flex; align-items: center; justify-content: center; border: 1px solid #2c3a86; border-top: 0; background: linear-gradient(#33408e, #0a1463); }
.winbtns .wide { width: 40px; }

.menubar { height: 18px; display: flex; justify-content: space-between; background: linear-gradient(#a0a0a0, #5c5c5c); color: #f4f4f4; }
.menus { display: grid; grid-template-columns: 32px 34px 37px 41px 45px 37px 40px 48px 66px 46px 51px 65px 48px 55px 52px 36px 56px 44px 51px 43px 40px; padding: 3px 0 0 41px; white-space: nowrap; }
.docbtns { display: flex; gap: 5px; align-items: center; padding-right: 3px; color: #222; }

.ribtabs { height: 14px; display: flex; gap: 14px; padding-left: 9px; background: #3f3f3f; color: #f5f5f5; white-space: nowrap; }
.ribtabs .on { margin: 1px -7px 0; padding: 0 7px; color: #222; background: linear-gradient(#ccc, #f8f8f8); border-radius: 2px 2px 0 0; }
.ribmin { display: flex; align-items: center; gap: 4px; padding-left: 10px; }
.ribmin i { width: 10px; height: 5px; border-radius: 2px; background: #ccc; }

.ribbon { height: 75px; display: flex; background: linear-gradient(#cfcfcf, #8f8f8f); color: #a3a3a3; }
.rp { display: flex; flex: none; flex-direction: column; border-right: 1px solid #c4c4c4; background: #fbfbfb; }
.rp h2 { height: 14px; padding-top: 1px; margin: 0 1px 1px; background: #ececec; color: #333; text-align: center; position: relative; }
.rp h2 .tri { margin-left: 2px; }
.launch { position: absolute; right: 3px; top: 5px; width: 4px; height: 4px; border: solid #666; border-width: 0 1px 1px 0; }
.rbody { flex: 1; display: flex; padding-top: 4px; color: #aaa; }
.rbody .tri { border-top-color: #777; border-left-width: 2px; border-right-width: 2px; border-top-width: 2px; }
.rbody .tri.up { border-bottom-color: #777; }
.rbody .dd::after { border-top-color: #777; }
.big { display: flex; flex-direction: column; align-items: center; text-align: center; line-height: 11px; white-space: nowrap; align-self: flex-start; }
.big svg { margin: 2px 0 3px; }
.big > .tri { margin-top: 3px; }
.rcol { display: flex; flex-direction: column; color: #aaa; }
.rcol button { height: 18px; display: flex; align-items: center; gap: 4px; white-space: nowrap; }
.p-nav { width: 135px; }
.p-nav .rbody { padding-left: 6px; gap: 6px; }
.p-nav .rcol button { gap: 3px; }
.p-views { width: 144px; }
.p-views .rbody { padding-left: 1px; gap: 4px; }
.viewlist { width: 95px; flex: none; height: 48px; margin-top: 4px; display: flex; border: 1px solid #ccc; color: #888; }
.viewlist ul { flex: 1; }
.viewlist li { height: 15px; display: flex; align-items: center; gap: 2px; padding-left: 1px; }
.vscroll { width: 11px; display: flex; flex-direction: column; justify-content: space-around; align-items: center; border-left: 1px solid #ddd; }
.p-vis { width: 179px; }
.stack { flex-direction: column; gap: 3px; padding-left: 3px; }
.vstyle { width: 153px; height: 16px; padding-left: 2px; gap: 2px; border: 1px solid #d8d8d8; }
.swatch { flex: none; width: 11px; height: 11px; background: #444; border: 1px solid #888; }
.vrow, .opacity { display: flex; width: 153px; height: 16px; }
.vrow button { flex: 1; display: flex; align-items: center; justify-content: space-around; border: 1px solid #ddd; }
.vrow .one, .opacity .one { flex: 0 0 18px; padding: 2px; border: 1px solid #ddd; }
.opacity { width: 172px; }
.opbar { flex: 0 0 133px; margin-left: 3px; background: linear-gradient(90deg, #edeff2 79px, #fdfdfd 79px); padding: 2px 5px; color: #ccc; }
.opacity output { padding: 2px 0 0 4px; border-left: 1px solid #ddd; width: 18px; }
.p-coord { width: 110px; }
.coord { display: grid; grid-template-columns: 27px 18px 17px 18px 18px; grid-auto-rows: 16px; gap: 2px; padding-left: 2px; }
.coord button { display: flex; align-items: center; justify-content: space-around; border: 1px solid #ddd; }
.world { grid-column: span 4; padding-left: 2px; gap: 1px; border: 1px solid #ddd; color: #333; }
.p-vp { width: 134px; }
.p-vp .rbody { padding-left: 10px; gap: 9px; }
.p-pal { width: 87px; }
.p-pal .rbody { padding: 4px 0 0 1px; gap: 1px; }
.lit { background: #c5dff4; border: 1px solid #6d9fcb; }
.big.lit { width: 46px; height: 55px; }
.palgrid { display: grid; grid-template-columns: 18px 18px; grid-auto-rows: 17px; gap: 2px 1px; color: #999; }
.palgrid button { display: flex; align-items: center; justify-content: center; }
.palgrid svg { opacity: .8; }
.p-ui { width: 250px; }
.p-ui .rbody { padding-left: 8px; gap: 5px; }
.p-ui .rcol { width: 84px; }
.p-ui .sep + .big { margin-right: 3px; }
.sep { width: 1px; height: 54px; background: #ddd; margin-right: 4px; }

.work { flex: 1; display: flex; min-height: 0; padding-top: 4px; border-top: 1px solid #ddd; background: #666; }
.palhead { height: 16px; padding: 2px 0 0 7px; margin-top: 1px; border-radius: 3px 3px 0 0; background: #999; color: #222; border-left: 2px dotted #666; }
.toolspace { width: 222px; flex: none; display: flex; background: #666; }
.tspanel { width: 207px; display: flex; flex-direction: column; background: #efefef; margin-bottom: 2px; }
.tstools { height: 22px; display: flex; align-items: center; gap: 7px; padding: 0 4px 0 2px; background: #f2f2f2; }
.tsview { height: 17px; padding-left: 2px; border: 1px solid #aaa; background: linear-gradient(#f5f5f5, #dcdcdc); border-radius: 2px; }
.treebox { height: 325px; margin-top: 1px; background: #fff; border: 1px solid #999; border-width: 1px 0; }
.tree { height: 306px; display: flex; flex-direction: column; position: relative; }
.tree li { flex: 1; display: flex; align-items: center; padding-left: 20px; }
.tree .root { padding-left: 6px; }
.tree::before { content: ""; position: absolute; left: 10px; top: 12px; height: 218px; border-left: 1px dashed #bbb; }
.tree li > :nth-child(2) { margin: 0 6px 0 4px; }
.tree .root > :nth-child(2) { margin-left: 4px; }
.ex { width: 9px; height: 9px; flex: none; position: relative; z-index: 1; }
.tree i.ex::before { content: ""; display: block; margin-top: 4px; margin-left: 4px; border-top: 1px dashed #bbb; }
.tree .sel { flex: 1; align-self: stretch; display: flex; align-items: center; margin: 0 0 0 -3px; padding-left: 3px; background: #a0a0a0; }
.sidetabs { width: 15px; display: flex; flex-direction: column; padding-top: 17px; }
.sidetabs button { width: 15px; height: 92px; writing-mode: vertical-rl; transform: rotate(180deg); text-align: center; line-height: 15px; background: #cbcbcb; border: 1px solid #777; border-width: 1px 0 0 1px; border-radius: 2px 0 0 2px; white-space: nowrap; }
.sidetabs .on { background: #f2f2f2; }

.drawing { flex: 1; min-width: 0; margin-left: 5px; display: flex; flex-direction: column; border-right: 1px solid #eee; }
.canvas { flex: 1; position: relative; background: #1f272e; border-top: 1px solid #111; }
.vplabel { padding: 3px 4px; color: #e2e4e6; }
.viewcube { position: absolute; right: 11px; top: 9px; width: 104px; height: 104px; text-anchor: middle; font: bold 10px "Liberation Sans", sans-serif; }
.wcs { position: absolute; right: 44px; top: 127px; width: 36px; height: 13px; border-radius: 3px; background: #9a9ea3; color: #4d545c; padding-left: 4px; font-size: 8px; line-height: 11px; }
.navbar { position: absolute; right: 2px; top: 159px; width: 25px; height: 162px; opacity: .8; }
.ucsicon { position: absolute; left: 11px; bottom: 7px; width: 56px; height: 60px; }
.cmd { position: absolute; left: 256px; bottom: 0; width: 320px; height: 20px; display: flex; align-items: center; gap: 6px; padding-left: 3px; background: #555; color: #ccc; }
.grip { width: 3px; height: 14px; border: dotted #999; border-width: 0 1px; }
.cmd label { flex: 1; height: 100%; display: flex; align-items: center; gap: 3px; padding: 0 3px; margin-left: -4px; background: #b9b9b9; }
.cmd input { flex: 1; padding-left: 3px; font: italic 9px "DejaVu Sans Mono", monospace; }
.cmd input::placeholder { color: #666; }
.layouts { height: 15px; display: flex; padding-left: 2px; background: #f0f0f0; }
.layouts .ar { width: 11px; font-size: 6px; border-right: 1px solid #bbb; color: #444; text-align: center; }
.lt { padding: 0 7px; font: 8px/14px "DejaVu Sans Condensed", Roboto, sans-serif; }
.lt + .lt { border-right: 1px solid #888; padding: 0 6px 0 5px; }
.lt.on { background: #1f272e; color: #fff; clip-path: polygon(0 0, 100% 0, calc(100% - 5px) 100%, 5px 100%); }

.win { position: absolute; border-radius: 5px; color: #222; }
.wtitle { height: 20px; display: flex; align-items: center; gap: 5px; padding-left: 2px; }
.back { left: 121px; top: 77px; width: 300px; height: 304px; padding: 0 5px 6px 4px; border: 1px solid #aab0d8; background: linear-gradient(#5a649f, #1d2866); box-shadow: 0 0 6px #000; display: flex; flex-direction: column; }
.back .wbody { flex: 1; padding: 6px 9px; background: #f0f0f0; }
.back .wbody label { display: block; margin-bottom: 2px; }
.back .wbody select { width: 260px; height: 16px; padding-left: 3px; border: 1px solid #999; background: #e6e6e6; }
.backlist { margin-top: 8px; height: 174px; background: #fff; border: 1px solid #888; }
.backlist b { display: block; height: 18px; padding: 4px; font-weight: normal; }
.backlist div { display: flex; align-items: center; height: 14px; gap: 3px; padding-left: 6px; font-weight: bold; background: #fdfde6; }
.backlist p { height: 13px; margin-left: 14px; border: 1px solid #e8d6d6; border-top: 0; background: #f6f6f6; }
.warn { width: 15px; height: 22px; margin: 5px 2px; }
.front { left: 156px; top: 36px; width: 514px; padding: 0 5px 5px; border: 1px solid #93a2e8; background: linear-gradient(90deg, #6c76c0, #0219b4 35%, #0017ac 60%, #5f74d0 90%) 0 0 / 100% 20px no-repeat, linear-gradient(#7f8bd6 80px, #98a3e2 106px, #0414a8 107px); box-shadow: 1px 2px 8px #000; }
.front .wtitle span { padding: 0 6px 0 2px; margin-left: -4px; border-radius: 8px; background: #8790c8; box-shadow: 0 0 6px 2px #8790c8; line-height: 8px; color: #111; }
.wbtns { margin: 0 3px 6px auto; height: 14px; align-self: flex-start; display: flex; color: #eee; }
.wbtns button { width: 21px; height: 14px; display: flex; align-items: center; justify-content: center; border: 1px solid #c5cbea; border-top: 0; background: linear-gradient(#7d8ccc, #3a4aa4); }
.wbtns .close { width: 36px; background: linear-gradient(#dd8a80, #b02a20); }
.front .wbody { padding: 7px 5px 6px; background: #f0f0f0; font: 8px/12px "DejaVu Sans Condensed", Roboto, sans-serif; }
.tabs { display: grid; grid-template-columns: 49px 34px 43px 30px 29px 39px 52px 36px 32px 41px; gap: 2px; padding-left: 3px; height: 14px; }
.tabs button { height: 14px; padding: 0 0 0 1px; background: linear-gradient(#f2f2f2, #dadada); border: 1px solid #aaa; border-right: 2px solid #777; border-bottom: 0; white-space: nowrap; }
.tabs button.on { background: #fafafa; border-color: #fafafa; padding-left: 2px; }
.page { padding: 11px 5px 7px 12px; background: #fafafa; border: solid #888; border-width: 0 1px 1px 0; }
.proplist { height: 126px; border: 1px solid #888; border-color: #777 #ddd #ddd #777; display: grid; grid-template: 1fr 14px / 1fr 14px; background: #f0f0f0; }
.plview { height: 110px; overflow: hidden; background: #fff; }
.plview table { width: 100%; font: 9px/13px Roboto, sans-serif; }
.plview th { height: 18px; padding: 0 4px; background: linear-gradient(#fff, #f1f3f6); border-right: 1px solid #ddd; border-bottom: 1px solid #ddd; }
.plview .c1 { width: 258px; }
.plview td { height: 15px; padding: 0 4px; background: #fefee8; border-bottom: 1px solid #c9c9d8; }
.plview tr:nth-child(2n) td { height: 14px; }
.plview td:first-child { background: linear-gradient(90deg, #fff 13px, #f3cfcf 13px, #f3cfcf 14px, #fefee8 14px); border-right: 1px solid #f3cfcf; padding-left: 29px; }
.plview .grp td:first-child { padding-left: 5px; }
.plview .grp .ex { display: inline-block; width: 8px; height: 8px; margin-right: 4px; vertical-align: -1px; }
.sbv { display: flex; flex-direction: column; padding: 1px; }
.sbv button { height: 13px; display: flex; align-items: center; justify-content: center; border: 1px solid #aaa; background: linear-gradient(90deg, #fafafa, #ccc); border-radius: 2px; }
.sbv button .tri { border-width: 3px 2px 0; }
.sbv button .tri.up { border-width: 0 2px 3px; }
.thumbv { height: 55px; margin: 9px 0 auto; display: flex; align-items: center; border: 1px solid #3c86b4; border-radius: 2px; background: linear-gradient(90deg, #d8f0fa, #6dc0e8 50%, #8cd0f0); }
.thumbv i { width: 6px; height: 7px; margin-left: 2px; border: solid #246; border-width: 1px 0; background: linear-gradient(#8cd0f0 2px, #246 2px, #246 3px, #8cd0f0 3px); }
.sbh { grid-column: span 2; display: flex; align-items: center; gap: 8px; padding: 0 18px 0 5px; }
.thumbh { flex: 1; margin-right: 8px; height: 12px; border: 1px solid #999; border-radius: 2px; background: linear-gradient(#f6f6f6, #ccc); text-align: center; font-size: 6px; line-height: 10px; }
.numlist { margin-top: 9px; height: 78px; background: #fff; border: 1px solid #ddd; border-color: #777 #ddd #ddd #777; }
.numlist table { width: 100%; }
.numlist th { height: 16px; padding: 0 1px; border-right: 1px solid #e4e4e4; border-bottom: 2px solid #eee; background: linear-gradient(#fff, #f1f3f6); }
.numlist td { height: 14px; padding: 0 1px; background: #f1f1f1; vertical-align: middle; }
.numlist td.red { color: #d81848; }
.numlist td.brown { color: #57271c; }
.chips { float: right; display: flex; height: 11px; margin-right: 1px; }
.chips i { width: 10px; border: 1px solid #8a96a6; background: linear-gradient(#c6ced8 4px, #778 4px, #778 5px, #c6ced8 5px); }
.chips .bars { background: repeating-linear-gradient(#c6ced8 0 1px, #345 1px 2px, #c6ced8 2px 3px); }
.chips .clr { background: conic-gradient(#c33 0 25%, #eee 0 50%, #e87a2a 0 75%, #4a80c8 0); }
fieldset { margin: 5px 0 0; height: 52px; padding: 0 13px; border: 1px solid #e2e4e6; min-width: 0; }
legend { padding: 0 2px; margin-left: -10px; }
.ticks { display: flex; justify-content: space-between; padding: 0 4px; height: 9px; }
.ticks i { width: 1px; height: 3px; background: #bbb; }
input[type="range"] { appearance: none; display: block; width: 100%; height: 4px; }
input[type="range"]::-webkit-slider-runnable-track { height: 1px; background: #999; }
input[type="range"]::-webkit-slider-thumb { appearance: none; width: 8px; height: 14px; margin-top: -7px; background: #fafafa; border: 1px solid #999; border-radius: 4px 4px 2px 2px; }
.ends { display: flex; justify-content: space-between; margin: 9px -2px 0 -3px; color: #999; }
.actions { display: flex; justify-content: flex-end; gap: 6px; margin-top: 10px; }
.actions button { width: 58px; height: 16px; text-align: center; border: 1px solid #888; border-radius: 2px; background: linear-gradient(#f6f6f6, #d6d6d6); }
.actions .ok { border-color: #2c8cb8; background: linear-gradient(#e8f6fc, #bfe6f8); box-shadow: inset 0 0 0 1px #58c8ec; }
.pointer { position: absolute; right: 7px; top: 98px; width: 26px; height: 28px; }
.sizer { position: absolute; right: 5px; bottom: 5px; }

.strip { width: 29px; flex: none; padding: 1px 0 0 5px; background: #666; }
.iconcol { width: 18px; height: 422px; padding-top: 4px; display: flex; flex-direction: column; align-items: center; justify-content: space-between; background: #f2f2f2; border: 1px solid #999; border-top: 4px solid #444; }
.iconcol hr { width: 14px; height: 1px; margin: 0; border: 0; background: #bbb; }
.small { height: 58px; }

.props { width: 192px; flex: none; display: flex; background: #666; }
.proppanel { flex: 1; min-width: 0; display: flex; flex-direction: column; margin-bottom: 3px; }
.propbody { flex: 1; padding: 8px 14px 0 8px; background: #f0f0f0; }
.seltools { display: flex; margin: 0 -7px 5px -2px; height: 18px; }
.seltools .dd { width: 104px; margin-right: 3px; padding-left: 3px; border: 1px solid #888; border-radius: 2px; background: linear-gradient(#f5f5f5, #dfdfdf); }
.seltools button { flex: 1; display: flex; align-items: center; justify-content: center; border: 1px solid #999; border-left-width: 0; }
.seltools .dd + button { border-left-width: 1px; }
.ps { margin-bottom: 3px; }
.ps h3 { height: 14px; display: flex; align-items: center; justify-content: space-between; padding: 0 6px 0 3px; font-weight: bold; background: linear-gradient(#b0b0b0, #969696); }
.ps table { width: calc(100% - 13px); margin-left: 13px; border: 1px solid #aaa; }
.ps th, .ps td { padding: 0 0 0 1px; border: 1px solid #aaa; line-height: 11px; white-space: nowrap; }
.ps th { width: 82px; background: #efefef; padding-left: 3px; }
.ps td { background: #fff; font-family: Roboto, sans-serif; }
.ps .ro { background: #efefef; }
.ps td i { display: inline-block; vertical-align: middle; margin: 0 4px 0 1px; }
.sq { width: 8px; height: 8px; border: 1px solid #222; }
.ln { width: 20px; height: 1px; background: #333; }
.r7 { height: 102px; }
.r2 { height: 29px; }
.r4 { height: 58px; }
.r5 { height: 73px; }
.r6 { height: 87px; }

.status { height: 16px; display: flex; align-items: center; background: linear-gradient(#a2a2a2, #868686); border-top: 1px solid #555; }
.coords { width: 184px; padding-left: 9px; font: 8px/14px "DejaVu Sans Condensed", Roboto, sans-serif; white-space: nowrap; }
.toggles { display: flex; height: 15px; }
.toggles svg { width: 17px; height: 15px; padding: 1px 2px; background: #b4b4b4; border-right: 1px solid #777; }
.toggles .act { background: #8fc4ea; }
.sright { height: 15px; display: flex; align-items: center; gap: 3px; padding: 0 2px; margin-left: 4px; background: #b0b0b0; border: solid #777; border-width: 0 1px; font: 9px/14px Roboto, sans-serif; }
.sright .tri { margin-left: 2px; }
.sright .bulb { background: #8a8a8a; }

.taskbar { height: 22px; display: flex; position: relative; color: #fff; background: linear-gradient(100deg, #0a1f9c, #00108c 40%, #06209c 55%, #00108a 65%, #0a1f94); border-top: 1px solid #3b4aa8; }
.start { width: 40px; padding-left: 6px; z-index: 1; }
.start svg { width: 28px; height: 28px; margin-top: -4px; }
.pins { display: flex; align-items: center; gap: 21px; width: 391px; padding-left: 13px; }
.task { width: 120px; height: 22px; margin-right: 4px; padding-left: 6px; display: flex; align-items: center; gap: 7px; border: 1px solid #6976c4; border-radius: 2px; background: linear-gradient(#3948a8, #10208e); white-space: nowrap; }
.task.on { background: linear-gradient(#8d98d8, #5463b6); gap: 2px; }
.tray { display: flex; align-items: center; gap: 6px; }
.tray .tri { margin: 0 4px 0 6px; }
.tray time { width: 56px; padding-left: 17px; }
.peek { width: 9px; border: 1px solid #5b69b8; background: #14268c; }
```
